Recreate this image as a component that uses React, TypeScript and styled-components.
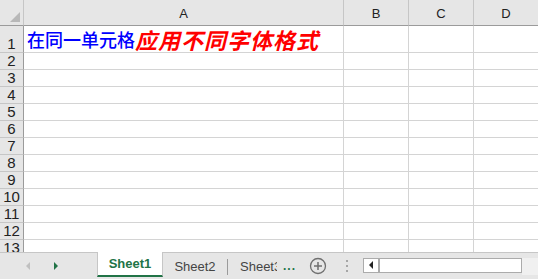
import React from "react";
import styled, { createGlobalStyle } from "styled-components";

const GlobalStyle = createGlobalStyle`
    html, body {
        margin: 0;
        padding: 0;
        background: #ffffff;
        font-family: "Liberation Sans", Arial, sans-serif;
    }
`;

const columns = [
    { name: "A", width: 320 },
    { name: "B", width: 65 },
    { name: "C", width: 65 },
    { name: "D", width: 65 },
];

const Screen = styled.div`
    width: 538px;
    height: 279px;
    display: flex;
    flex-direction: column;
    overflow: hidden;
`;

const Grid = styled.div`
    flex: 1;
    overflow: hidden;
    display: flex;
    flex-direction: column;
`;

const Row = styled.div<{ $h: number }>`
    display: flex;
    flex: 0 0 ${(p) => p.$h}px;
    height: ${(p) => p.$h}px;
`;

const Corner = styled.div`
    flex: 0 0 24px;
    background: #e6e6e6;
    border-right: 1px solid #c6c6c6;
    border-bottom: 1px solid #9b9b9b;
    box-sizing: border-box;
    display: flex;
    align-items: flex-end;
    justify-content: flex-end;
    padding: 0 3px 3px 0;
`;

const CornerMark = styled.div`
    width: 0;
    height: 0;
    border-left: 10px solid transparent;
    border-bottom: 10px solid #b8b8b8;
`;

const ColHeader = styled.div<{ $w: number }>`
    flex: 0 0 ${(p) => p.$w}px;
    background: #e6e6e6;
    border-right: 1px solid #c6c6c6;
    border-bottom: 1px solid #9b9b9b;
    box-sizing: border-box;
    display: flex;
    align-items: flex-end;
    justify-content: center;
    padding-bottom: 4px;
    font-size: 13px;
    color: #222;
`;

const RowHeader = styled.div`
    flex: 0 0 24px;
    background: #e6e6e6;
    border-right: 1px solid #9b9b9b;
    border-bottom: 1px solid #c6c6c6;
    box-sizing: border-box;
    display: flex;
    align-items: flex-end;
    justify-content: center;
    font-size: 15px;
    line-height: 16px;
    color: #222;
`;

const Cell = styled.div<{ $w: number }>`
    flex: 0 0 ${(p) => p.$w}px;
    border-right: 1px solid #d4d4d4;
    border-bottom: 1px solid #d4d4d4;
    box-sizing: border-box;
    display: flex;
    align-items: center;
    padding-left: 3px;
    white-space: nowrap;
    overflow: visible;
`;

const BlueText = styled.span`
    font-family: "Noto Sans CJK SC", sans-serif;
    font-size: 18px;
    font-weight: 500;
    color: #0000ff;
    line-height: 1;
`;

const RedText = styled.span`
    font-family: "Noto Sans CJK SC", sans-serif;
    font-size: 22px;
    font-weight: bold;
    font-style: italic;
    letter-spacing: 1px;
    color: #ff0000;
    line-height: 1;
`;

const TabBar = styled.div`
    flex: 0 0 26px;
    background: #e6e6e6;
    border-top: 1px solid #c6c6c6;
    display: flex;
    align-items: stretch;
`;

const Nav = styled.div`
    flex: 0 0 97px;
    display: flex;
    align-items: center;
    gap: 24px;
    padding-left: 26px;
    box-sizing: border-box;
`;

const Arrow = styled.div<{ $dir: "left" | "right"; $color: string }>`
    width: 0;
    height: 0;
    border-top: 4px solid transparent;
    border-bottom: 4px solid transparent;
    ${(p) => (p.$dir === "left" ? `border-right: 4px solid ${p.$color};` : `border-left: 4px solid ${p.$color};`)}
`;

const ActiveTab = styled.div`
    flex: 0 0 66px;
    margin-top: -1px;
    margin-bottom: 2px;
    background: #ffffff;
    border-left: 1px solid #c6c6c6;
    border-right: 1px solid #c6c6c6;
    border-bottom: 2px solid #217346;
    box-sizing: border-box;
    display: flex;
    align-items: center;
    justify-content: center;
    font-size: 13px;
    font-weight: bold;
    color: #217346;
`;

const Tab = styled.div<{ $w: number }>`
    flex: 0 0 ${(p) => p.$w}px;
    display: flex;
    align-items: center;
    justify-content: center;
    font-size: 13px;
    color: #444;
`;

const Divider = styled.div`
    flex: 0 0 1px;
    background: #9b9b9b;
    margin: 6px 0 4px;
`;

const ClippedTab = styled.div`
    flex: 0 0 70px;
    display: flex;
    align-items: center;
    padding-left: 12px;
    box-sizing: border-box;
    font-size: 13px;
    color: #444;
    gap: 6px;
`;

const Clip = styled.span`
    flex: 0 0 37px;
    overflow: hidden;
    white-space: nowrap;
`;

const More = styled.span`
    color: #217346;
    font-weight: bold;
    letter-spacing: 1px;
    font-size: 12px;
`;

const IconSlot = styled.div<{ $w: number }>`
    flex: 0 0 ${(p) => p.$w}px;
    display: flex;
    align-items: center;
    justify-content: center;
`;

const Scroll = styled.div`
    flex: 1;
    display: flex;
    align-items: center;
    padding-left: 7px;
    padding-bottom: 2px;
`;

const ScrollBox = styled.div`
    flex: 0 0 159px;
    height: 15px;
    box-sizing: border-box;
    border: 1px solid #ababab;
    background: #ffffff;
    display: flex;
`;

const ScrollBtn = styled.div`
    flex: 0 0 14px;
    border-right: 2px solid #ababab;
    display: flex;
    align-items: center;
    justify-content: center;
`;

const Track = styled.div`
    flex: 1;
    align-self: stretch;
    background: #f0f0f0;
    margin: 5px 0 2px;
`;

const App: React.FC = () => {
    const rows = Array.from({ length: 13 }, (_, i) => i + 1);
    return (
        <>
            <GlobalStyle />
            <Screen>
                <Grid>
                    <Row $h={26}>
                        <Corner>
                            <CornerMark />
                        </Corner>
                        {columns.map((c) => (
                            <ColHeader key={c.name} $w={c.width}>{c.name}</ColHeader>
                        ))}
                    </Row>
                    {rows.map((r) => (
                        <Row key={r} $h={r === 1 ? 27 : 17}>
                            <RowHeader>{r}</RowHeader>
                            {columns.map((c) => (
                                <Cell key={c.name} $w={c.width}>
                                    {r === 1 && c.name === "A" && (
                                        <>
                                            <BlueText>在同一单元格</BlueText>
                                            <RedText>应用不同字体格式</RedText>
                                        </>
                                    )}
                                </Cell>
                            ))}
                        </Row>
                    ))}
                </Grid>
                <TabBar>
                    <Nav>
                        <Arrow $dir="left" $color="#c0c0c0" />
                        <Arrow $dir="right" $color="#217346" />
                    </Nav>
                    <ActiveTab>Sheet1</ActiveTab>
                    <Tab $w={64}>Sheet2</Tab>
                    <Divider />
                    <ClippedTab>
                        <Clip>Sheet3</Clip>
                        <More>...</More>
                    </ClippedTab>
                    <IconSlot $w={40}>
                        <svg width="18" height="18" viewBox="0 0 18 18">
                            <circle cx="9" cy="9" r="7.5" fill="none" stroke="#6f6f6f" strokeWidth="1.3" />
                            <path d="M9 5v8M5 9h8" stroke="#6f6f6f" strokeWidth="1.5" />
                        </svg>
                    </IconSlot>
                    <IconSlot $w={18}>
                        <svg width="4" height="14" viewBox="0 0 4 14">
                            <rect x="1" y="1" width="2" height="2" fill="#a6a6a6" />
                            <rect x="1" y="6" width="2" height="2" fill="#a6a6a6" />
                            <rect x="1" y="11" width="2" height="2" fill="#a6a6a6" />
                        </svg>
                    </IconSlot>
                    <Scroll>
                        <ScrollBox>
                            <ScrollBtn>
                                <Arrow $dir="left" $color="#222" />
                            </ScrollBtn>
                        </ScrollBox>
                        <Track />
                    </Scroll>
                </TabBar>
            </Screen>
        </>
    );
};

export default App;
